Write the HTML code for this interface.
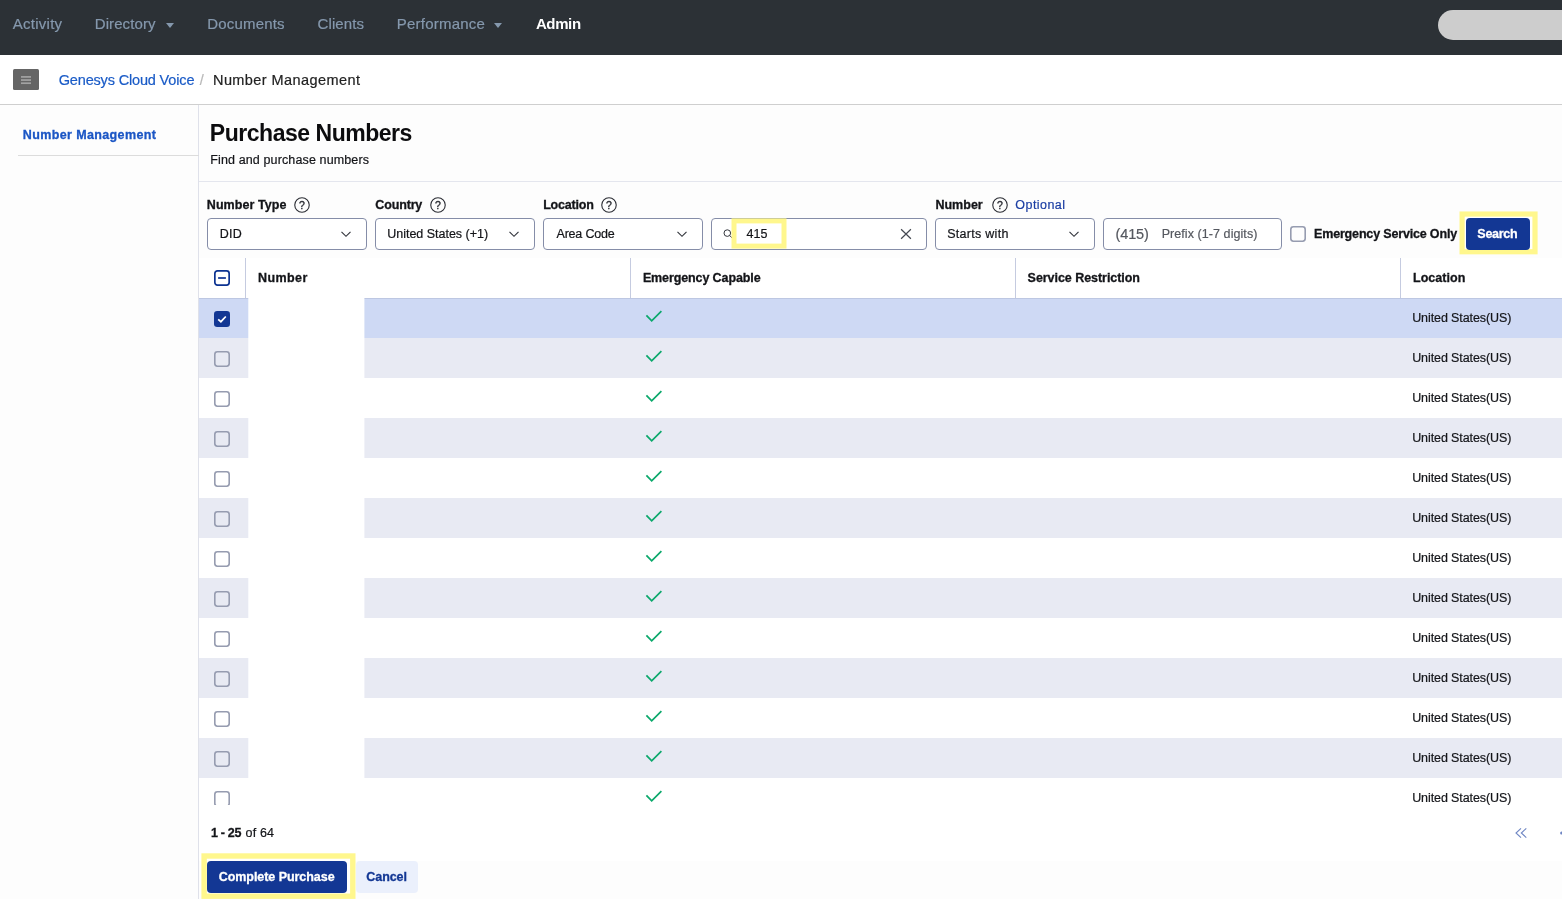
<!DOCTYPE html>
<html lang="en">
<head>
<meta charset="utf-8">
<title>Number Management - Purchase Numbers</title>
<style>
*{box-sizing:border-box;margin:0;padding:0}
html,body{width:1562px;height:899px;overflow:hidden;background:#fdfdfd;font-family:"Liberation Sans",sans-serif;font-size:12px;color:#131418}
.abs{position:absolute}
#wrap{position:absolute;left:0;top:0;width:1562px;height:899px;will-change:transform}
.t{position:absolute;line-height:20px;white-space:nowrap}
#nav{position:absolute;left:0;top:0;width:1562px;height:55px;background:#2c3136}
#nav i{position:absolute;top:22.5px;width:0;height:0;border-left:4.5px solid transparent;border-right:4.5px solid transparent;border-top:5px solid #8598ad}
#pill{position:absolute;left:1438px;top:10px;width:160px;height:30px;border-radius:15px;background:#cdcdcd}
#crumb{position:absolute;left:0;top:55px;width:1562px;height:50px;background:#fff;border-bottom:1px solid #cfcfcf}
#ham{position:absolute;left:13px;top:69px;width:26px;height:21px;border-radius:1.5px;background:#656565}
#ham b{position:absolute;left:8px;width:10px;height:1.5px;background:#a4a4a4}
#side{position:absolute;left:0;top:105px;width:199px;height:794px;background:#fdfdfd;border-right:1px solid #dfe1ea}
#side .ln{position:absolute;left:18px;top:50px;width:181px;height:1px;background:#dcdcdc}
#main{position:absolute;left:199px;top:105px;width:1363px;height:794px;background:#fdfdfd}
#hr{position:absolute;left:199px;top:181px;width:1363px;height:1px;background:#e4e6ee}
.help{position:absolute;top:196px;width:17px;height:17px}
.sel{position:absolute;top:218px;height:32px;border:1px solid #858da8;border-radius:4px;background:#fff}
.chev{position:absolute;top:230px;overflow:visible}
#thead{position:absolute;left:199px;top:258px;width:1363px;height:40px;background:#fff}
.vd{position:absolute;top:258px;width:1px;height:40px;background:#c5cbe0}
.row{position:absolute;left:199px;width:1363px;height:40px;background:#fff}
.row.odd{background:#e8eaf3}
.row.selr{background:#ced9f4}
.row .cb{position:absolute;left:15px;top:13px;width:16px;height:16px}
.row .ck{position:absolute;left:446px;top:10px}
.row .loc{position:absolute;top:10px;-webkit-text-stroke:0.2px;line-height:20px;font-size:12.5px;white-space:nowrap}
#mask{position:absolute;left:248px;top:298px}
#tbot{position:absolute;left:199px;top:805px;width:1363px;height:56px;background:#fff}
#foot{position:absolute;left:199px;top:861px;width:1363px;height:38px;background:#fdfdfd}
.hl{position:absolute;border:5px solid #fff78d;background:#fff}
.btn{position:absolute;height:32px;border-radius:4px}
.pri{background:#133794}
.sec{background:#ebf0fc}
</style>
</head>
<body>
<div id="wrap">
<div id="nav">
  <i style="left:165.5px"></i><i style="left:494px"></i>
  <div id="pill"></div>
</div>
<div id="n1" class="t" style="left:12.80px;top:14px;font-size:15px;font-weight:400;color:#8598ad;letter-spacing:0.260px;-webkit-text-stroke:0.2px;">Activity</div>
<div id="n2" class="t" style="left:94.78px;top:14px;font-size:15px;font-weight:400;color:#8598ad;letter-spacing:0.088px;-webkit-text-stroke:0.2px;">Directory</div>
<div id="n3" class="t" style="left:207.27px;top:14px;font-size:15px;font-weight:400;color:#8598ad;letter-spacing:0.182px;-webkit-text-stroke:0.2px;">Documents</div>
<div id="n4" class="t" style="left:317.49px;top:14px;font-size:15px;font-weight:400;color:#8598ad;letter-spacing:0.128px;-webkit-text-stroke:0.2px;">Clients</div>
<div id="n5" class="t" style="left:396.72px;top:14px;font-size:15px;font-weight:400;color:#8598ad;letter-spacing:0.225px;-webkit-text-stroke:0.2px;">Performance</div>
<div id="n6" class="t" style="left:535.92px;top:14px;font-size:15px;font-weight:700;color:#fff;letter-spacing:-0.380px;">Admin</div>
<div id="crumb"></div>
<div id="ham"><svg width="26" height="21" viewBox="0 0 26 21" style="display:block"><rect x="8" y="7.05" width="10" height="1.7" fill="#a2a2a2"/><rect x="8" y="10.2" width="10" height="1.7" fill="#a2a2a2"/><rect x="8" y="13.35" width="10" height="1.7" fill="#a2a2a2"/></svg></div>
<div id="c1" class="t" style="left:58.71px;top:70px;font-size:14.5px;font-weight:400;color:#1a5bc7;letter-spacing:-0.161px;-webkit-text-stroke:0.2px;">Genesys Cloud Voice</div>
<div id="c2" class="t" style="left:199.80px;top:70px;font-size:14.5px;font-weight:400;color:#b9b9b9;letter-spacing:0.000px;-webkit-text-stroke:0.2px;">/</div>
<div id="c3" class="t" style="left:213.01px;top:70px;font-size:14.5px;font-weight:400;color:#222;letter-spacing:0.417px;-webkit-text-stroke:0.2px;">Number Management</div>
<div id="side"><div class="ln"></div></div>
<div id="s1" class="t" style="left:22.86px;top:125px;font-size:12.5px;font-weight:700;color:#1b56c5;letter-spacing:0.370px;-webkit-text-stroke:0.3px;">Number Management</div>
<div id="main"></div>
<div id="h1" class="t" style="left:209.84px;top:117px;font-size:23px;font-weight:700;color:#0c0c0e;letter-spacing:-0.475px;line-height:32px;">Purchase Numbers</div>
<div id="sub" class="t" style="left:210.25px;top:150px;font-size:12.5px;font-weight:400;color:#131418;letter-spacing:0.129px;-webkit-text-stroke:0.2px;">Find and purchase numbers</div>
<div id="hr"></div>

<div id="l1" class="t" style="left:206.82px;top:195px;font-size:12.5px;font-weight:700;color:#131418;letter-spacing:0.073px;-webkit-text-stroke:0.3px;">Number Type</div>
<div id="l2" class="t" style="left:375.37px;top:195px;font-size:12.5px;font-weight:700;color:#131418;letter-spacing:-0.162px;-webkit-text-stroke:0.3px;">Country</div>
<div id="l3" class="t" style="left:543.15px;top:195px;font-size:12.5px;font-weight:700;color:#131418;letter-spacing:-0.203px;-webkit-text-stroke:0.3px;">Location</div>
<div id="l4" class="t" style="left:935.45px;top:195px;font-size:12.5px;font-weight:700;color:#131418;letter-spacing:0.010px;-webkit-text-stroke:0.3px;">Number</div>
<div id="l5" class="t" style="left:1015.36px;top:195px;font-size:12.5px;font-weight:400;color:#1a3da3;letter-spacing:0.432px;-webkit-text-stroke:0.2px;">Optional</div>
<svg class="help" style="left:293.1px" viewBox="0 0 17 17" overflow="visible"><circle cx="9" cy="9" r="7.25" fill="none" stroke="#2a2c33" stroke-width="1.1"/><text x="9" y="12.8" font-size="10.5" font-family="Liberation Sans, sans-serif" text-anchor="middle" fill="#2a2c33" stroke="#2a2c33" stroke-width="0.35">?</text></svg><svg class="help" style="left:429.3px" viewBox="0 0 17 17" overflow="visible"><circle cx="9" cy="9" r="7.25" fill="none" stroke="#2a2c33" stroke-width="1.1"/><text x="9" y="12.8" font-size="10.5" font-family="Liberation Sans, sans-serif" text-anchor="middle" fill="#2a2c33" stroke="#2a2c33" stroke-width="0.35">?</text></svg><svg class="help" style="left:600.4px" viewBox="0 0 17 17" overflow="visible"><circle cx="9" cy="9" r="7.25" fill="none" stroke="#2a2c33" stroke-width="1.1"/><text x="9" y="12.8" font-size="10.5" font-family="Liberation Sans, sans-serif" text-anchor="middle" fill="#2a2c33" stroke="#2a2c33" stroke-width="0.35">?</text></svg><svg class="help" style="left:991.1px" viewBox="0 0 17 17" overflow="visible"><circle cx="9" cy="9" r="7.25" fill="none" stroke="#2a2c33" stroke-width="1.1"/><text x="9" y="12.8" font-size="10.5" font-family="Liberation Sans, sans-serif" text-anchor="middle" fill="#2a2c33" stroke="#2a2c33" stroke-width="0.35">?</text></svg>

<div class="sel" style="left:207px;width:160px"></div>
<div class="sel" style="left:375px;width:160px"></div>
<div class="sel" style="left:543px;width:160px"></div>
<div class="sel" style="left:711px;width:216px"></div>
<div class="sel" style="left:935px;width:160px"></div>
<div class="sel" style="left:1103px;width:179px"></div>
<svg class="chev" style="left:339.7px" width="12" height="8" viewBox="0 0 12 8"><path d="M1.5 1.8 L6 6.3 L10.5 1.8" fill="none" stroke="#33363d" stroke-width="1.15"/></svg>
<svg class="chev" style="left:507.7px" width="12" height="8" viewBox="0 0 12 8"><path d="M1.5 1.8 L6 6.3 L10.5 1.8" fill="none" stroke="#33363d" stroke-width="1.15"/></svg>
<svg class="chev" style="left:675.7px" width="12" height="8" viewBox="0 0 12 8"><path d="M1.5 1.8 L6 6.3 L10.5 1.8" fill="none" stroke="#33363d" stroke-width="1.15"/></svg>
<svg class="chev" style="left:1067.7px" width="12" height="8" viewBox="0 0 12 8"><path d="M1.5 1.8 L6 6.3 L10.5 1.8" fill="none" stroke="#33363d" stroke-width="1.15"/></svg>
<div id="v1" class="t" style="left:219.73px;top:224px;font-size:12.5px;font-weight:400;color:#131418;letter-spacing:0.244px;-webkit-text-stroke:0.2px;">DID</div>
<div id="v2" class="t" style="left:387.23px;top:224px;font-size:12.5px;font-weight:400;color:#131418;letter-spacing:-0.016px;-webkit-text-stroke:0.2px;">United States (+1)</div>
<div id="v3" class="t" style="left:556.50px;top:224px;font-size:12.5px;font-weight:400;color:#131418;letter-spacing:-0.193px;-webkit-text-stroke:0.2px;">Area Code</div>
<div id="v5" class="t" style="left:947.19px;top:224px;font-size:12.5px;font-weight:400;color:#131418;letter-spacing:0.283px;-webkit-text-stroke:0.2px;">Starts with</div>
<svg class="abs" style="left:720px;top:226px" width="14" height="14" viewBox="0 0 14 14"><circle cx="7.3" cy="7.1" r="3.3" fill="none" stroke="#33363d" stroke-width="1"/><path d="M9.7 9.5 L12.2 12" stroke="#33363d" stroke-width="1" fill="none"/></svg>
<svg class="abs" style="left:899px;top:227px" width="14" height="14" viewBox="0 0 14 14"><path d="M2.1 2.2 L11.9 11.8 M11.9 2.2 L2.1 11.8" stroke="#444851" stroke-width="1.2" fill="none"/></svg>
<svg class="abs" style="left:730px;top:217px" width="58" height="33" viewBox="0 0 58 33"><rect x="4.00" y="3.90" width="50.00" height="25.20" fill="#fff" stroke="#fff78d" stroke-width="5"/></svg>
<div id="v4" class="t" style="left:746.54px;top:224px;font-size:12.5px;font-weight:400;color:#131418;letter-spacing:0.013px;-webkit-text-stroke:0.2px;">415</div>
<div id="v6" class="t" style="left:1115.45px;top:224px;font-size:14.5px;font-weight:400;color:#55585f;letter-spacing:-0.090px;-webkit-text-stroke:0.2px;">(415)</div>
<div id="v7" class="t" style="left:1161.66px;top:224px;font-size:12.5px;font-weight:400;color:#55585f;letter-spacing:0.070px;-webkit-text-stroke:0.2px;">Prefix (1-7 digits)</div>
<svg class="abs" style="left:1290px;top:226px" width="16" height="16" viewBox="0 0 16 16"><rect x="0.8" y="0.8" width="14.4" height="14.4" rx="2.6" fill="none" stroke="#969cb0" stroke-width="1.6"/></svg>
<div id="l6" class="t" style="left:1314.03px;top:224px;font-size:12.5px;font-weight:700;color:#131418;letter-spacing:-0.166px;-webkit-text-stroke:0.3px;">Emergency Service Only</div>
<svg class="abs" style="left:1458px;top:210px" width="81" height="46" viewBox="0 0 81 46"><rect x="4.10" y="4.05" width="72.90" height="37.70" fill="#fff" stroke="#fff78d" stroke-width="5.2"/></svg>
<div class="btn pri" style="left:1466px;top:218px;width:64px"></div>
<div id="b1" class="t" style="left:1477.33px;top:224px;font-size:12.5px;font-weight:700;color:#fff;letter-spacing:-0.273px;-webkit-text-stroke:0.3px;">Search</div>

<div id="thead"></div>
<div class="vd" style="left:245px"></div><div class="vd" style="left:630px"></div><div class="vd" style="left:1015px"></div><div class="vd" style="left:1400px"></div>
<svg class="abs" style="left:214px;top:270px" width="16" height="16" viewBox="0 0 16 16"><rect x="0.85" y="0.85" width="14.3" height="14.3" rx="2.6" fill="#fff" stroke="#0c3391" stroke-width="1.7"/><rect x="4.1" y="7.1" width="7.8" height="1.8" fill="#1c3f98"/></svg>
<div id="t1" class="t" style="left:258.00px;top:268px;font-size:12.5px;font-weight:700;color:#131418;letter-spacing:0.424px;-webkit-text-stroke:0.3px;">Number</div>
<div id="t2" class="t" style="left:642.89px;top:268px;font-size:12.5px;font-weight:700;color:#131418;letter-spacing:-0.112px;-webkit-text-stroke:0.3px;">Emergency Capable</div>
<div id="t3" class="t" style="left:1027.62px;top:268px;font-size:12.5px;font-weight:700;color:#131418;letter-spacing:-0.047px;-webkit-text-stroke:0.3px;">Service Restriction</div>
<div id="t4" class="t" style="left:1413.00px;top:268px;font-size:12.5px;font-weight:700;color:#131418;letter-spacing:0.029px;-webkit-text-stroke:0.3px;">Location</div>
<div id="rows">
<div class="row selr" style="top:298px"><svg class="cb" width="16" height="16" viewBox="0 0 16 16"><rect x="0" y="0" width="16" height="16" rx="3.2" fill="#133794"/><path d="M4.2 8.3 L6.9 10.7 L11.8 5.5" fill="none" stroke="#fff" stroke-width="1.7"/></svg><svg class="ck" width="20" height="20" viewBox="0 0 20 20"><path d="M1.4 7.3 L6.7 12.8 L16.4 3.1" fill="none" stroke="#0aa86b" stroke-width="1.7"/></svg><span class="loc" id="loc0" style="left:1213.17px;letter-spacing:-0.092px">United States(US)</span></div>
<div class="row odd" style="top:338px"><svg class="cb" width="16" height="16" viewBox="0 0 16 16"><rect x="0.8" y="0.8" width="14.4" height="14.4" rx="2.6" fill="none" stroke="#969cb0" stroke-width="1.6"/></svg><svg class="ck" width="20" height="20" viewBox="0 0 20 20"><path d="M1.4 7.3 L6.7 12.8 L16.4 3.1" fill="none" stroke="#0aa86b" stroke-width="1.7"/></svg><span class="loc" id="loc1" style="left:1213.17px;letter-spacing:-0.092px">United States(US)</span></div>
<div class="row" style="top:378px"><svg class="cb" width="16" height="16" viewBox="0 0 16 16"><rect x="0.8" y="0.8" width="14.4" height="14.4" rx="2.6" fill="none" stroke="#969cb0" stroke-width="1.6"/></svg><svg class="ck" width="20" height="20" viewBox="0 0 20 20"><path d="M1.4 7.3 L6.7 12.8 L16.4 3.1" fill="none" stroke="#0aa86b" stroke-width="1.7"/></svg><span class="loc" id="loc2" style="left:1213.17px;letter-spacing:-0.092px">United States(US)</span></div>
<div class="row odd" style="top:418px"><svg class="cb" width="16" height="16" viewBox="0 0 16 16"><rect x="0.8" y="0.8" width="14.4" height="14.4" rx="2.6" fill="none" stroke="#969cb0" stroke-width="1.6"/></svg><svg class="ck" width="20" height="20" viewBox="0 0 20 20"><path d="M1.4 7.3 L6.7 12.8 L16.4 3.1" fill="none" stroke="#0aa86b" stroke-width="1.7"/></svg><span class="loc" id="loc3" style="left:1213.17px;letter-spacing:-0.092px">United States(US)</span></div>
<div class="row" style="top:458px"><svg class="cb" width="16" height="16" viewBox="0 0 16 16"><rect x="0.8" y="0.8" width="14.4" height="14.4" rx="2.6" fill="none" stroke="#969cb0" stroke-width="1.6"/></svg><svg class="ck" width="20" height="20" viewBox="0 0 20 20"><path d="M1.4 7.3 L6.7 12.8 L16.4 3.1" fill="none" stroke="#0aa86b" stroke-width="1.7"/></svg><span class="loc" id="loc4" style="left:1213.17px;letter-spacing:-0.092px">United States(US)</span></div>
<div class="row odd" style="top:498px"><svg class="cb" width="16" height="16" viewBox="0 0 16 16"><rect x="0.8" y="0.8" width="14.4" height="14.4" rx="2.6" fill="none" stroke="#969cb0" stroke-width="1.6"/></svg><svg class="ck" width="20" height="20" viewBox="0 0 20 20"><path d="M1.4 7.3 L6.7 12.8 L16.4 3.1" fill="none" stroke="#0aa86b" stroke-width="1.7"/></svg><span class="loc" id="loc5" style="left:1213.17px;letter-spacing:-0.092px">United States(US)</span></div>
<div class="row" style="top:538px"><svg class="cb" width="16" height="16" viewBox="0 0 16 16"><rect x="0.8" y="0.8" width="14.4" height="14.4" rx="2.6" fill="none" stroke="#969cb0" stroke-width="1.6"/></svg><svg class="ck" width="20" height="20" viewBox="0 0 20 20"><path d="M1.4 7.3 L6.7 12.8 L16.4 3.1" fill="none" stroke="#0aa86b" stroke-width="1.7"/></svg><span class="loc" id="loc6" style="left:1213.17px;letter-spacing:-0.092px">United States(US)</span></div>
<div class="row odd" style="top:578px"><svg class="cb" width="16" height="16" viewBox="0 0 16 16"><rect x="0.8" y="0.8" width="14.4" height="14.4" rx="2.6" fill="none" stroke="#969cb0" stroke-width="1.6"/></svg><svg class="ck" width="20" height="20" viewBox="0 0 20 20"><path d="M1.4 7.3 L6.7 12.8 L16.4 3.1" fill="none" stroke="#0aa86b" stroke-width="1.7"/></svg><span class="loc" id="loc7" style="left:1213.17px;letter-spacing:-0.092px">United States(US)</span></div>
<div class="row" style="top:618px"><svg class="cb" width="16" height="16" viewBox="0 0 16 16"><rect x="0.8" y="0.8" width="14.4" height="14.4" rx="2.6" fill="none" stroke="#969cb0" stroke-width="1.6"/></svg><svg class="ck" width="20" height="20" viewBox="0 0 20 20"><path d="M1.4 7.3 L6.7 12.8 L16.4 3.1" fill="none" stroke="#0aa86b" stroke-width="1.7"/></svg><span class="loc" id="loc8" style="left:1213.17px;letter-spacing:-0.092px">United States(US)</span></div>
<div class="row odd" style="top:658px"><svg class="cb" width="16" height="16" viewBox="0 0 16 16"><rect x="0.8" y="0.8" width="14.4" height="14.4" rx="2.6" fill="none" stroke="#969cb0" stroke-width="1.6"/></svg><svg class="ck" width="20" height="20" viewBox="0 0 20 20"><path d="M1.4 7.3 L6.7 12.8 L16.4 3.1" fill="none" stroke="#0aa86b" stroke-width="1.7"/></svg><span class="loc" id="loc9" style="left:1213.17px;letter-spacing:-0.092px">United States(US)</span></div>
<div class="row" style="top:698px"><svg class="cb" width="16" height="16" viewBox="0 0 16 16"><rect x="0.8" y="0.8" width="14.4" height="14.4" rx="2.6" fill="none" stroke="#969cb0" stroke-width="1.6"/></svg><svg class="ck" width="20" height="20" viewBox="0 0 20 20"><path d="M1.4 7.3 L6.7 12.8 L16.4 3.1" fill="none" stroke="#0aa86b" stroke-width="1.7"/></svg><span class="loc" id="loc10" style="left:1213.17px;letter-spacing:-0.092px">United States(US)</span></div>
<div class="row odd" style="top:738px"><svg class="cb" width="16" height="16" viewBox="0 0 16 16"><rect x="0.8" y="0.8" width="14.4" height="14.4" rx="2.6" fill="none" stroke="#969cb0" stroke-width="1.6"/></svg><svg class="ck" width="20" height="20" viewBox="0 0 20 20"><path d="M1.4 7.3 L6.7 12.8 L16.4 3.1" fill="none" stroke="#0aa86b" stroke-width="1.7"/></svg><span class="loc" id="loc11" style="left:1213.17px;letter-spacing:-0.092px">United States(US)</span></div>
<div class="row" style="top:778px"><svg class="cb" width="16" height="16" viewBox="0 0 16 16"><rect x="0.8" y="0.8" width="14.4" height="14.4" rx="2.6" fill="none" stroke="#969cb0" stroke-width="1.6"/></svg><svg class="ck" width="20" height="20" viewBox="0 0 20 20"><path d="M1.4 7.3 L6.7 12.8 L16.4 3.1" fill="none" stroke="#0aa86b" stroke-width="1.7"/></svg><span class="loc" id="loc12" style="left:1213.17px;letter-spacing:-0.092px">United States(US)</span></div>
</div>
<div class="abs" style="left:199px;top:298px;width:1363px;height:1px;background:#bdc7e2"></div>
<svg id="mask" width="118" height="510" viewBox="0 0 118 510"><rect x="0.3" y="0" width="116.1" height="510" fill="#fff"/></svg>
<div id="tbot"></div>
<div id="p1" class="t" style="left:210.92px;top:823px;font-size:12.5px;font-weight:700;color:#131418;letter-spacing:-0.282px;-webkit-text-stroke:0.3px;">1 - 25</div>
<div id="p2" class="t" style="left:245.62px;top:823px;font-size:12.5px;font-weight:400;color:#131418;letter-spacing:0.143px;-webkit-text-stroke:0.2px;">of 64</div>
<svg class="abs" style="left:1512px;top:824px" width="50" height="18" viewBox="0 0 50 18"><path d="M9 4.3 L4 9 L9 13.6 M14.3 4.3 L9.3 9 L14.3 13.6" fill="none" stroke="#6e85c3" stroke-width="1.1"/><circle cx="49.6" cy="9" r="1.5" fill="#6e85c3"/></svg>
<div id="foot"></div>
<svg class="abs" style="left:200px;top:852px" width="157" height="48" viewBox="0 0 157 48"><rect x="4.10" y="4.00" width="148.70" height="40.20" fill="#fff" stroke="#fff78d" stroke-width="5.4"/></svg>
<div class="btn pri" style="left:207px;top:861px;width:140px"></div>
<div id="b2" class="t" style="left:218.67px;top:867px;font-size:12.5px;font-weight:700;color:#fff;letter-spacing:-0.048px;-webkit-text-stroke:0.3px;">Complete Purchase</div>
<div class="btn sec" style="left:355.5px;top:861px;width:62.5px"></div>
<div id="b3" class="t" style="left:366.33px;top:867px;font-size:12.5px;font-weight:700;color:#133794;letter-spacing:-0.078px;-webkit-text-stroke:0.3px;">Cancel</div>
</div>
</body>
</html>
